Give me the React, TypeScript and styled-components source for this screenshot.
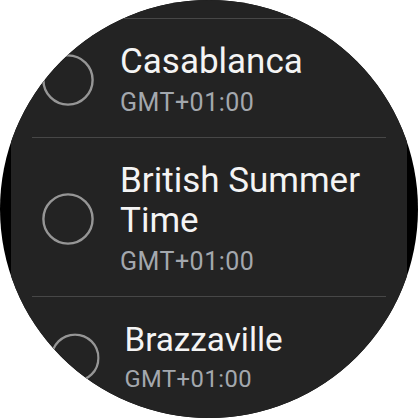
import React from 'react';
import styled, { createGlobalStyle } from 'styled-components';

const GlobalStyle = createGlobalStyle`
  html, body {
    margin: 0;
    padding: 0;
    background: #ffffff;
  }
  body {
    font-family: Roboto, 'Noto Sans', sans-serif;
  }
`;

const Watch = styled.div`
  width: 418px;
  height: 418px;
  border-radius: 50%;
  overflow: hidden;
  background: #000000;
  display: flex;
`;

const List = styled.div`
  flex: 1;
  margin: 0 11px;
  background: #232323;
  padding-top: 18px;
  display: flex;
  flex-direction: column;
  overflow: hidden;
`;

const Row = styled.div`
  margin: 0 21px;
  border-top: 1px solid #474747;
`;

// items near the bottom edge shrink a little, like a curved wear list
const RowBody = styled.div<{ $scale: number }>`
  display: flex;
  align-items: center;
  padding: 23px 0 19px 10px;
  transform: scale(${(p) => p.$scale});
  transform-origin: center center;
`;

const Radio = styled.svg`
  flex: none;
  width: 52px;
  height: 52px;
  margin-right: 26px;
`;

const Texts = styled.div`
  display: flex;
  flex-direction: column;
  gap: 6px;
  min-width: 0;
`;

const Title = styled.div`
  font-size: 35px;
  line-height: 40px;
  color: #f4f4f4;
`;

const Subtitle = styled.div`
  font-size: 25px;
  line-height: 30px;
  color: #a3a8ae;
  letter-spacing: 0.5px;
`;

type Zone = { name: string; offset: string; scale: number };

const zones: Zone[] = [
  { name: 'Casablanca', offset: 'GMT+01:00', scale: 1 },
  { name: 'British Summer Time', offset: 'GMT+01:00', scale: 1 },
  { name: 'Brazzaville', offset: 'GMT+01:00', scale: 0.95 },
];

const RadioIcon = () => (
  <Radio viewBox="0 0 52 52">
    <circle cx="26" cy="26" r="24.6" fill="none" stroke="#969696" strokeWidth="2.4" />
  </Radio>
);

const App: React.FC = () => {
  return (
    <>
      <GlobalStyle />
      <Watch>
        <List>
          {zones.map((z) => (
            <Row key={z.name}>
              <RowBody $scale={z.scale}>
                <RadioIcon />
                <Texts>
                  <Title>{z.name}</Title>
                  <Subtitle>{z.offset}</Subtitle>
                </Texts>
              </RowBody>
            </Row>
          ))}
        </List>
      </Watch>
    </>
  );
};

export default App;
